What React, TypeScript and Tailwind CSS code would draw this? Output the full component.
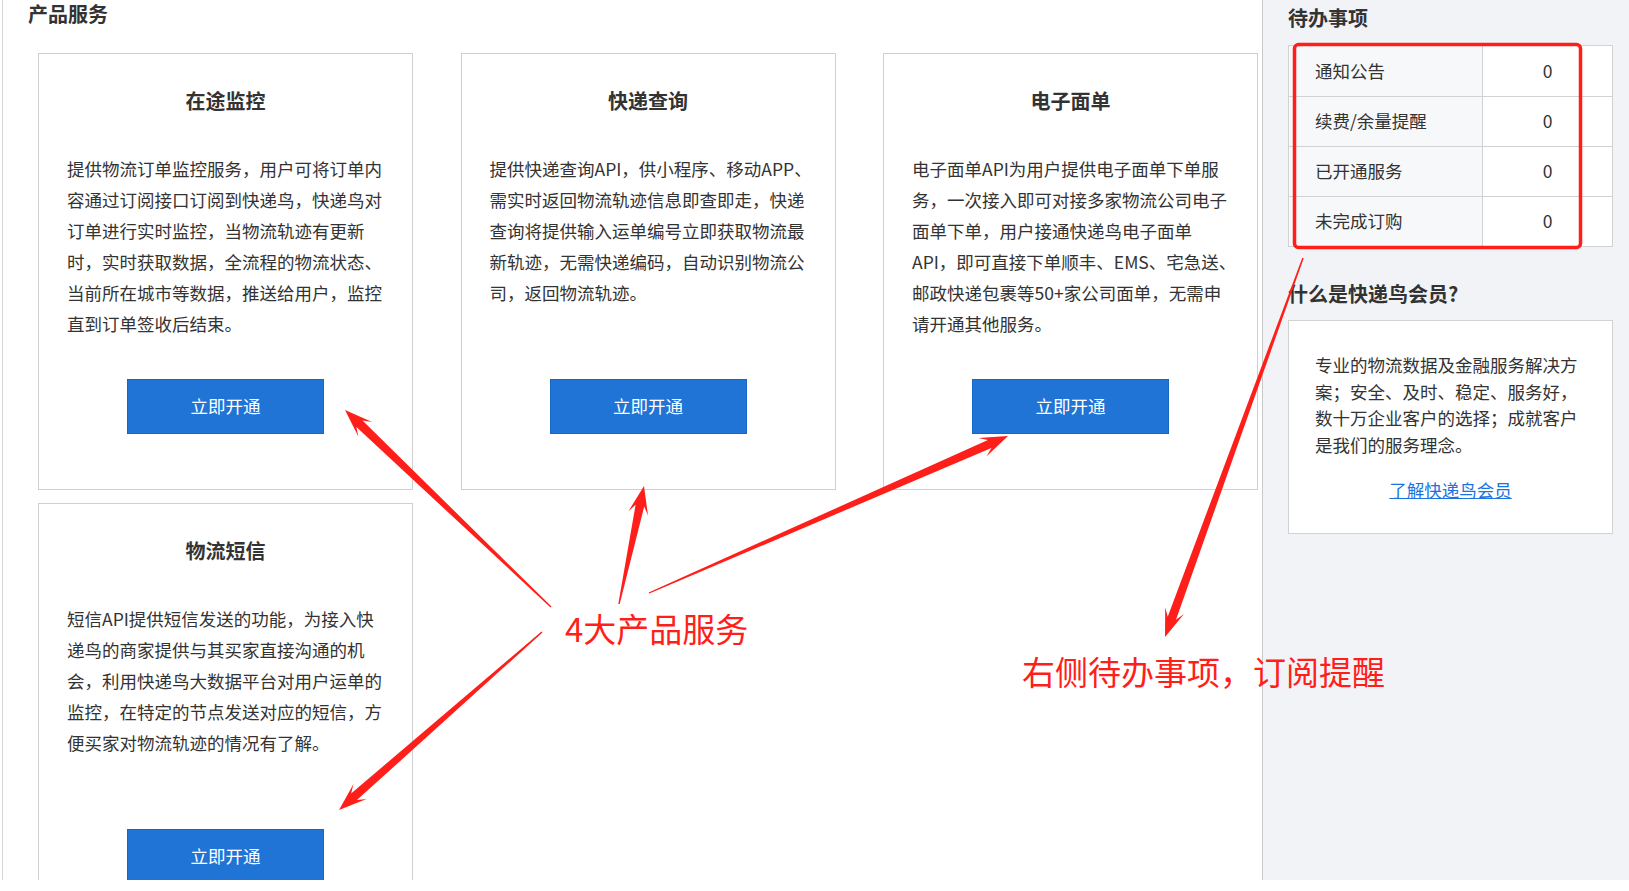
import React from "react";

const cards = [
  {
    title: "在途监控",
    lines: [
      "提供物流订单监控服务，用户可将订单内",
      "容通过订阅接口订阅到快递鸟，快递鸟对",
      "订单进行实时监控，当物流轨迹有更新",
      "时，实时获取数据，全流程的物流状态、",
      "当前所在城市等数据，推送给用户，监控",
      "直到订单签收后结束。",
    ],
  },
  {
    title: "快递查询",
    lines: [
      "提供快递查询API，供小程序、移动APP、",
      "需实时返回物流轨迹信息即查即走，快递",
      "查询将提供输入运单编号立即获取物流最",
      "新轨迹，无需快递编码，自动识别物流公",
      "司，返回物流轨迹。",
    ],
  },
  {
    title: "电子面单",
    lines: [
      "电子面单API为用户提供电子面单下单服",
      "务，一次接入即可对接多家物流公司电子",
      "面单下单，用户接通快递鸟电子面单",
      "API，即可直接下单顺丰、EMS、宅急送、",
      "邮政快递包裹等50+家公司面单，无需申",
      "请开通其他服务。",
    ],
  },
  {
    title: "物流短信",
    lines: [
      "短信API提供短信发送的功能，为接入快",
      "递鸟的商家提供与其买家直接沟通的机",
      "会，利用快递鸟大数据平台对用户运单的",
      "监控，在特定的节点发送对应的短信，方",
      "便买家对物流轨迹的情况有了解。",
    ],
  },
];

const todos = ["通知公告", "续费/余量提醒", "已开通服务", "未完成订购"];

const memberLines = [
  "专业的物流数据及金融服务解决方",
  "案；安全、及时、稳定、服务好，",
  "数十万企业客户的选择；成就客户",
  "是我们的服务理念。",
];

// annotation arrows: [tailX, tailY, tipX, tipY]
const arrows: [number, number, number, number][] = [
  [551, 607, 345, 410],
  [619, 604, 644, 486],
  [649, 593, 1008, 436],
  [542, 632, 339, 810],
  [1303, 258, 1165, 637],
];

function arrowPoints([x1, y1, x2, y2]: [number, number, number, number]) {
  const len = Math.hypot(x2 - x1, y2 - y1);
  const ux = (x2 - x1) / len;
  const uy = (y2 - y1) / len;
  const nx = -uy;
  const ny = ux;
  const headLen = 28;
  const neck = 20;
  const pt = (along: number, side: number) =>
    `${(x2 - ux * along + nx * side).toFixed(1)},${(y2 - uy * along + ny * side).toFixed(1)}`;
  return [
    `${(x1 + nx * 0.7).toFixed(1)},${(y1 + ny * 0.7).toFixed(1)}`,
    pt(neck, 4.4),
    pt(headLen, 10),
    pt(0, 0),
    pt(headLen, -10),
    pt(neck, -4.4),
    `${(x1 - nx * 0.7).toFixed(1)},${(y1 - ny * 0.7).toFixed(1)}`,
  ].join(" ");
}

function ProductCard({ card }: { card: (typeof cards)[0] }) {
  return (
    <div className="h-[437px] border border-[#cfcfcf] bg-white pt-[33px]">
      <h3 className="text-center text-[20px] font-bold leading-[28px] text-[#333]">{card.title}</h3>
      <div className="mt-[38px] h-[226px] px-[28px] text-[17.5px] leading-[31px] text-[#333]">
        {card.lines.map((line) => (
          <div key={line} className="whitespace-nowrap">
            {line}
          </div>
        ))}
      </div>
      <button className="mx-auto block h-[55px] w-[197px] border border-[#1866c4] bg-[#1f74d6] text-[17.5px] text-white">
        立即开通
      </button>
    </div>
  );
}

export default function App() {
  return (
    <div className="relative h-[891px] w-[1629px] overflow-hidden bg-white font-['Noto_Sans_CJK_SC','Microsoft_YaHei',sans-serif]">
      <div className="flex h-[880px] overflow-hidden">
        <main className="h-full w-[1262px] shrink-0 overflow-hidden bg-white">
          <div className="ml-[2px] h-full border-l border-[#d6d6d6] pl-[25px]">
            <h2 className="text-[20px] font-bold leading-[28px] text-[#333]">产品服务</h2>
            <div className="ml-[10px] mt-[25px] grid grid-cols-[375px_375px_375px] gap-x-[47.5px] gap-y-[13px]">
              {cards.map((card) => (
                <ProductCard key={card.title} card={card} />
              ))}
            </div>
          </div>
        </main>

        <aside className="h-full flex-1 border-l border-[#c9c9c9] bg-[#f2f3f7] pl-[25px] pr-[16px] pt-[4px]">
          <h2 className="text-[20px] font-bold leading-[28px] text-[#333]">待办事项</h2>
          <div className="mt-[13px] border border-[#d2d2d2] bg-white">
            {todos.map((t, i) => (
              <div key={t} className={`flex h-[50px] ${i > 0 ? "border-t border-[#d2d2d2]" : ""}`}>
                <div className="flex w-[194px] items-center border-r border-[#d2d2d2] bg-[#f7f8fa] pl-[26px] text-[17.5px] text-[#333]">
                  {t}
                </div>
                <div className="flex flex-1 items-center justify-center text-[17.5px] text-[#333]">0</div>
              </div>
            ))}
          </div>

          <h2 className="mt-[33px] text-[20px] font-bold leading-[28px] text-[#333]">什么是快递鸟会员?</h2>
          <div className="mt-[12px] h-[214px] border border-[#d2d2d2] bg-white pl-[26px] pt-[31px]">
            <div className="text-[17.5px] leading-[26.7px] text-[#333]">
              {memberLines.map((line) => (
                <div key={line} className="whitespace-nowrap">
                  {line}
                </div>
              ))}
            </div>
            <div className="mt-[18px] pr-[26px] text-center text-[17.5px] leading-[26px]">
              <a href="#" className="text-[#1a73e0] underline">
                了解快递鸟会员
              </a>
            </div>
          </div>
        </aside>
      </div>

      {/* annotations drawn over the screenshot */}
      <svg className="pointer-events-none absolute left-0 top-0" width={1629} height={891}>
        <rect x={1294.5} y={44.5} width={286} height={203} rx={4} fill="none" stroke="#ff1f1a" strokeWidth={3.5} />
        {arrows.map((a, i) => (
          <polygon key={i} points={arrowPoints(a)} fill="#ff1f1a" />
        ))}
      </svg>
      <div className="pointer-events-none absolute left-[565px] top-[608px] whitespace-nowrap text-[33px] leading-[40px] text-[#ff1f1a]">
        4大产品服务
      </div>
      <div className="pointer-events-none absolute left-[1022px] top-[651px] whitespace-nowrap text-[33px] leading-[40px] text-[#ff1f1a]">
        右侧待办事项，订阅提醒
      </div>
    </div>
  );
}
